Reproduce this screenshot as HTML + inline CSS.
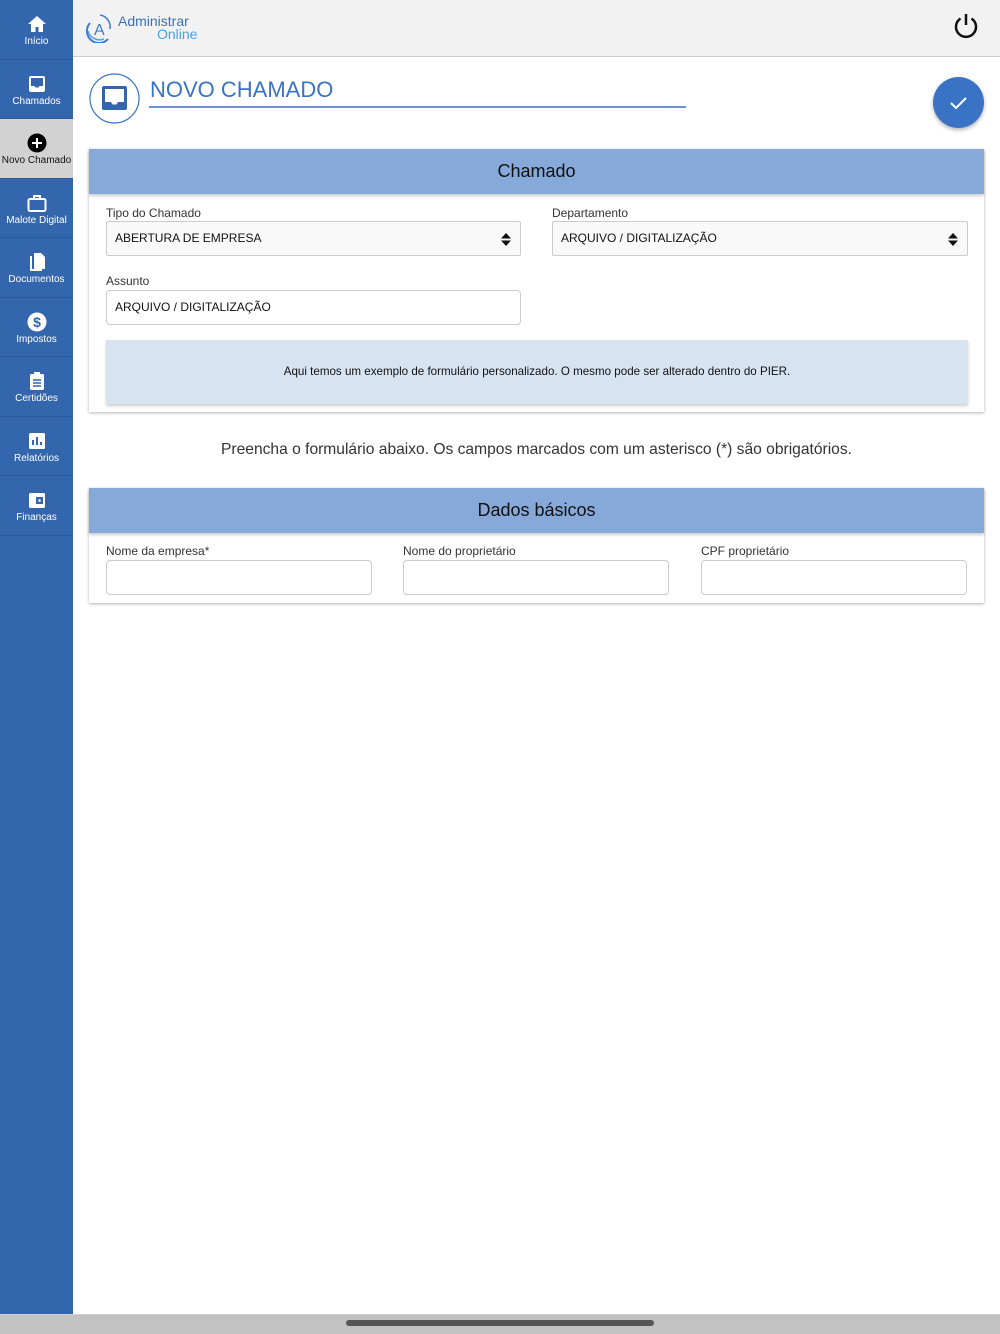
<!DOCTYPE html>
<html><head><meta charset="utf-8"><style>
*{box-sizing:border-box;margin:0;padding:0}
body{width:1000px;height:1334px;position:relative;font-family:"Liberation Sans",sans-serif;background:#fff;overflow:hidden;color:#222}
.side{position:absolute;left:0;top:0;width:73px;height:1314px;background:#3466ae}
.it{height:59.5px;border-bottom:1px solid #2c5a9c;color:#fff;text-align:center;font-size:10px;padding-top:14px}
.it svg{display:block;margin:0 auto 2px;width:20px;height:20px}
.it.act{background:#d2d2d2;color:#111}
.hdr{position:absolute;left:73px;top:0;right:0;height:57px;background:#f2f2f2;border-bottom:1px solid #cfcfcf}
.card{position:absolute;left:89px;width:895px;background:#fff;box-shadow:0 1px 3px rgba(0,0,0,.3)}
.ch{background:#86a9da;height:45px;text-align:center;font-size:18px;line-height:45px;color:#111;box-shadow:0 2px 3px rgba(0,0,0,.2)}
.lbl{position:absolute;font-size:12px;color:#333}
.inp{position:absolute;height:35px;border:1px solid #ccc;background:#fff;font-size:12px;line-height:33px;padding-left:8px;color:#111}
.sel{background:#f9f9f9;border-radius:2px}
.rnd{border-radius:4px}
.arr{position:absolute;right:9px;top:11px}
</style></head><body>
<div class="side">
<div class="it"><svg viewBox="0 0 20 20"><path d="M10 2L1 10h3v8h4.5v-5h3v5H16v-8h3z" fill="#fff"/></svg>Início</div>
<div class="it"><svg viewBox="0 0 20 20"><rect x="2" y="2" width="16" height="16" rx="2" fill="#fff"/><path d="M4 4h12v8h-3.5l-1 1.5h-3l-1-1.5H4z" fill="#3466ae"/></svg>Chamados</div>
<div class="it act"><svg viewBox="0 0 20 20"><circle cx="10" cy="10" r="9.5" fill="#000"/><path d="M10 5v10M5 10h10" stroke="#fff" stroke-width="2"/></svg>Novo Chamado</div>
<div class="it"><svg viewBox="0 0 20 20"><rect x="1.5" y="6" width="17" height="12" rx="1.5" fill="none" stroke="#fff" stroke-width="2"/><path d="M7 6V3h6v3" fill="none" stroke="#fff" stroke-width="2"/></svg>Malote Digital</div>
<div class="it"><svg viewBox="0 0 20 20"><path d="M3 4h2v13h10v2H3z" fill="#fff"/><path d="M7 1h7l4 4v12H7z" fill="#fff"/></svg>Documentos</div>
<div class="it"><svg viewBox="0 0 20 20"><circle cx="10" cy="10" r="9.5" fill="#fff"/><text x="10" y="15" font-size="14" font-weight="bold" text-anchor="middle" fill="#3466ae" font-family="Liberation Sans">$</text></svg>Impostos</div>
<div class="it"><svg viewBox="0 0 20 20"><rect x="3" y="3" width="14" height="16" rx="1.5" fill="#fff"/><rect x="7" y="1" width="6" height="4" fill="#fff"/><path d="M6 9h8M6 12h8M6 15h8" stroke="#3466ae" stroke-width="1.5"/></svg>Certidões</div>
<div class="it"><svg viewBox="0 0 20 20"><rect x="2" y="2" width="16" height="16" rx="1.5" fill="#fff"/><path d="M6 14V9M10 14V6M14 14v-3" stroke="#3466ae" stroke-width="2"/></svg>Relatórios</div>
<div class="it"><svg viewBox="0 0 20 20"><rect x="2" y="3" width="16" height="15" rx="1.5" fill="#fff"/><rect x="9" y="7" width="7" height="7" fill="#3466ae"/><circle cx="12.5" cy="10.5" r="1.3" fill="#fff"/></svg>Finanças</div>
</div>
<div class="hdr">
<svg style="position:absolute;left:13px;top:11px" width="28" height="32" viewBox="0 0 28 32"><path d="M4 12a12 12 0 0 0 18 16" fill="none" stroke="#3b7ad0" stroke-width="2"/><path d="M2 20a12 12 0 0 0 16 8" fill="none" stroke="#5aa0e0" stroke-width="1.5"/><path d="M14 4a12 12 0 0 1 10 14" fill="none" stroke="#3b7ad0" stroke-width="1.5"/><text x="8" y="24" font-size="16" fill="#3b7ad0" font-family="Liberation Sans">A</text></svg>
<div style="position:absolute;left:45px;top:14px;font-size:14px;color:#3b6fb8;line-height:14px">Administrar</div>
<div style="position:absolute;left:84px;top:27px;font-size:14px;color:#4aa0e8;line-height:14px">Online</div>
<svg style="position:absolute;right:20px;top:12px" width="28" height="28" viewBox="0 0 28 28"><path d="M8.5 6.5A10 10 0 1 0 19.5 6.5" fill="none" stroke="#111" stroke-width="2.5"/><path d="M14 2v11" stroke="#111" stroke-width="2.5"/></svg>
</div>
<svg style="position:absolute;left:89px;top:73px" width="51" height="51" viewBox="0 0 51 51"><circle cx="25.5" cy="25.5" r="24.5" fill="#fff" stroke="#3a73c4" stroke-width="1.2"/><rect x="13" y="13" width="25" height="24" rx="2" fill="#3466ae"/><path d="M16 16h19v13h-6l-1.5 2.5h-4L22 29h-6z" fill="#fff"/></svg>
<div style="position:absolute;left:150px;top:77px;font-size:22px;color:#3a73c4">NOVO CHAMADO</div>
<div style="position:absolute;left:149px;top:106px;width:537px;height:2px;background:#6b95d0"></div>
<div style="position:absolute;left:933px;top:77px;width:51px;height:51px;border-radius:50%;background:#3a73c4;box-shadow:0 2px 4px rgba(0,0,0,.3)"><svg width="51" height="51" viewBox="0 0 51 51"><path d="M18 26l5 5 10-10" fill="none" stroke="#fff" stroke-width="2"/></svg></div>

<div class="card" style="top:149px;height:263px">
<div class="ch">Chamado</div>
<div class="lbl" style="left:17px;top:57px">Tipo do Chamado</div>
<div class="inp sel" style="left:17px;top:72px;width:415px">ABERTURA DE EMPRESA<svg class="arr" width="10" height="13" viewBox="0 0 10 13"><path d="M5 0l5 5.5H0zM5 13l5-5.5H0z" fill="#111"/></svg></div>
<div class="lbl" style="left:463px;top:57px">Departamento</div>
<div class="inp sel" style="left:463px;top:72px;width:416px">ARQUIVO / DIGITALIZAÇÃO<svg class="arr" width="10" height="13" viewBox="0 0 10 13"><path d="M5 0l5 5.5H0zM5 13l5-5.5H0z" fill="#111"/></svg></div>
<div class="lbl" style="left:17px;top:125px">Assunto</div>
<div class="inp rnd" style="left:17px;top:141px;width:415px">ARQUIVO / DIGITALIZAÇÃO</div>
<div style="position:absolute;left:17px;top:191px;width:862px;height:64px;background:#d8e3f2;box-shadow:0 2px 3px rgba(0,0,0,.2);text-align:center;line-height:64px;font-size:11.6px;color:#111">Aqui temos um exemplo de formulário personalizado. O mesmo pode ser alterado dentro do PIER.</div>
</div>
<div style="position:absolute;left:89px;width:895px;top:441px;text-align:center;font-size:15.6px;color:#333">Preencha o formulário abaixo. Os campos marcados com um asterisco (*) são obrigatórios.</div>
<div class="card" style="top:488px;height:115px">
<div class="ch">Dados básicos</div>
<div class="lbl" style="left:17px;top:56px">Nome da empresa*</div>
<div class="inp rnd" style="left:17px;top:72px;width:266px"></div>
<div class="lbl" style="left:314px;top:56px">Nome do proprietário</div>
<div class="inp rnd" style="left:314px;top:72px;width:266px"></div>
<div class="lbl" style="left:612px;top:56px">CPF proprietário</div>
<div class="inp rnd" style="left:612px;top:72px;width:266px"></div>
</div>
<div style="position:absolute;left:0;top:1314px;width:1000px;height:20px;background:#c2c2c2;border-top:1px solid #d0d0d0"></div>
<div style="position:absolute;left:346px;top:1320px;width:308px;height:6px;border-radius:3px;background:#555"></div>
</body></html>
